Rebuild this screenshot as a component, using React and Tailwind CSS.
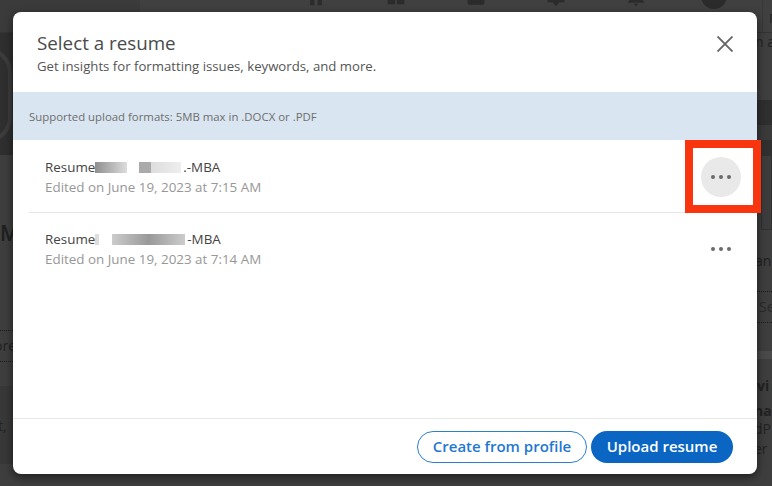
import React from "react";

function NavIcon({ d, className }) {
  return (
    <svg viewBox="0 0 24 24" className={className} fill="#2b2b2b">
      <path d={d} />
    </svg>
  );
}

function Dots() {
  return (
    <div className="flex gap-[4px]">
      <span className="w-[4px] h-[4px] rounded-full bg-[#6b6b6b]" />
      <span className="w-[4px] h-[4px] rounded-full bg-[#6b6b6b]" />
      <span className="w-[4px] h-[4px] rounded-full bg-[#6b6b6b]" />
    </div>
  );
}

function Patch({ className }) {
  return <span className={"block h-[11px] blur-[0.7px] " + className} />;
}

function ResumeRow({ date, first, children }) {
  return (
    <div className={"flex items-center justify-between mx-4 pl-4 " + (first ? "h-[73px] pt-[2px] border-b border-[#e6e6e6]" : "h-[72px]")}>
      <div className="flex flex-col">
        <div className="flex items-center h-[20px] text-[13.4px] text-[#444444] font-medium">{children}</div>
        <div className="h-[20px] leading-[20px] text-[13.4px] text-[#979797]">{date}</div>
      </div>
      <div className={"w-[40px] h-[40px] rounded-full flex items-center justify-center " + (first ? "bg-[#e9e9e9]" : "")}>
        <Dots />
      </div>
    </div>
  );
}

export default function App() {
  return (
    <div className="relative w-[772px] h-[486px] overflow-hidden bg-[#3e3e3e] font-['Open_Sans',sans-serif]">
      {/* dimmed page behind the dialog */}
      <header className="h-[33px] flex bg-[#404040] border-b border-[#333333]">
        <div className="w-[140px] bg-[#3b3b3b]" />
        <nav className="flex-1 flex items-start gap-[60px] pl-[166px] overflow-hidden">
          <NavIcon className="w-[20px] h-[20px] shrink-0 -mt-[13px]" d="M12 2 2 11h3v11h5v-7h4v7h5V11h3z" />
          <NavIcon className="w-[20px] h-[20px] shrink-0 -mt-[14px]" d="M2 6h9v16H2zM13 13h9v9h-9z" />
          <NavIcon className="w-[20px] h-[20px] shrink-0 -mt-[12px]" d="M2 3h20v15a2 2 0 0 1-2 2H4a2 2 0 0 1-2-2z" />
          <NavIcon className="w-[20px] h-[20px] shrink-0 -mt-[12px]" d="M2 2h20v15h-6l-4 5-4-5H2z" />
          <NavIcon className="w-[20px] h-[20px] shrink-0 -mt-[13px]" d="M5 2h14v12l3 5H2l3-5zM9 20h6l-3 3z" />
          <span className="w-[26px] h-[26px] shrink-0 rounded-full bg-[#2b2b2b] -mt-[17px] -ml-[5px]" />
        </nav>
        <div className="w-[10px] border-l border-[#383838] text-[13px] text-[#222222] pl-[6px] pt-[10px] leading-[16px] overflow-hidden">F</div>
      </header>

      <main className="flex justify-between h-[453px] text-[#222222]">
        <aside className="w-[13px] flex flex-col overflow-hidden">
          <div className="h-[122px] bg-[#2f2f2f] relative overflow-hidden">
            <span className="absolute -left-[40px] top-[14px] w-[52px] h-[96px] rounded-full border-[4px] border-[#3c3c3c]" />
          </div>
          <div className="h-[175px] text-[21px] font-semibold leading-[20px] pt-[68px] text-[#202020]">M</div>
          <div className="h-[32px] border-y border-dotted border-[#1c1c1c] text-[14px] leading-[30px] whitespace-nowrap -indent-[6px]">ore</div>
          <div className="h-[24px]" />
          <div className="h-[78px] bg-[#383838] text-[14px] leading-[16px] pt-[32px] -indent-[2px]">t,</div>
        </aside>

        <aside className="w-[15px] flex flex-col overflow-hidden whitespace-nowrap text-[14px]">
          <div className="h-[67px] bg-[#3f3f3f] leading-[18px] -indent-[2px]">n a</div>
          <div className="h-[25px] bg-[#2f2f2f]" />
          <div className="h-[15px] bg-[#3a3a3a]" />
          <div className="h-[15px] bg-[#303030]" />
          <div className="h-[75px] border border-[#303030] bg-[#3c3c3c] ml-[4px]" />
          <div className="h-[61px] leading-[18px] pt-[22px] -indent-[2px] text-[#1f1f1f]">an</div>
          <div className="h-[32px] border-y border-dotted border-[#1c1c1c] leading-[30px] pl-[2px] text-[#2a2a2a]">Se</div>
          <div className="h-[28px]" />
          <div className="h-[8px] bg-[#4a4a4a]" />
          <div className="h-[35px] leading-[18px] pt-[18px] font-bold">vi</div>
          <div className="h-[20px] leading-[18px] pt-[8px] -indent-[3px] font-bold">na</div>
          <div className="h-[20px] leading-[18px] pt-[6px] -indent-[3px]">dP</div>
          <div className="h-[20px] leading-[18px] pt-[6px] -indent-[3px]">er</div>
        </aside>
      </main>

      {/* dialog */}
      <section className="absolute left-[13px] top-[12px] w-[744px] h-[462px] bg-white rounded-lg shadow-[0_3px_10px_rgba(0,0,0,0.55)] flex flex-col overflow-hidden">
        <div className="h-[80px] shrink-0 flex items-start justify-between pl-[24px] pr-[24px] pt-[19px]">
          <div>
            <h2 className="text-[18.8px] leading-[24px] text-[#4a4a4a]">Select a resume</h2>
            <p className="text-[13.2px] leading-[22px] text-[#555555]">Get insights for formatting issues, keywords, and more.</p>
          </div>
          <svg viewBox="0 0 16 16" className="w-[16px] h-[16px] mt-[5px]" fill="none" stroke="#666666" strokeWidth="1.9">
            <path d="M0.5 0.5 15.5 15.5M15.5 0.5 0.5 15.5" />
          </svg>
        </div>

        <div className="h-[48px] shrink-0 bg-[#d9e5f0] flex items-center pl-4 pt-[2px] text-[11.4px] text-[#6e6e6e]">
          Supported upload formats: 5MB max in .DOCX or .PDF
        </div>

        <div className="flex-1">
          <ResumeRow date="Edited on June 19, 2023 at 7:15 AM" first>
            <span>Resume</span>
            <span className="flex w-[88px] items-center">
              <Patch className="w-[32px] bg-gradient-to-r from-[#8f8f8f] to-[#dddddd]" />
              <span className="w-[12px]" />
              <Patch className="w-[12px] bg-[#aaaaaa]" />
              <Patch className="w-[30px] bg-gradient-to-r from-[#dddddd] to-[#eeeeee]" />
            </span>
            <span>.-MBA</span>
          </ResumeRow>
          <ResumeRow date="Edited on June 19, 2023 at 7:14 AM">
            <span>Resume</span>
            <span className="flex w-[92px] items-center">
              <Patch className="w-[4px] bg-[#dddddd]" />
              <span className="w-[13px]" />
              <Patch className="w-[73px] bg-gradient-to-r from-[#cccccc] via-[#999999] to-[#cccccc]" />
            </span>
            <span>-MBA</span>
          </ResumeRow>
        </div>

        <div className="h-[56px] shrink-0 border-t border-[#e8e8e8] flex items-center justify-end gap-[4px] pr-[24px]">
          <button className="h-[32px] w-[170px] rounded-full border border-[#2c7fd0] text-[#1f78d1] text-[15px] font-semibold">Create from profile</button>
          <button className="h-[32px] w-[142px] rounded-full bg-[#0a66c2] text-white text-[15px] font-semibold">Upload resume</button>
        </div>
      </section>

      {/* red annotation */}
      <div className="absolute left-[685px] top-[140px] w-[76px] h-[73px] border-[8px] border-[#f93510]" />
    </div>
  );
}
